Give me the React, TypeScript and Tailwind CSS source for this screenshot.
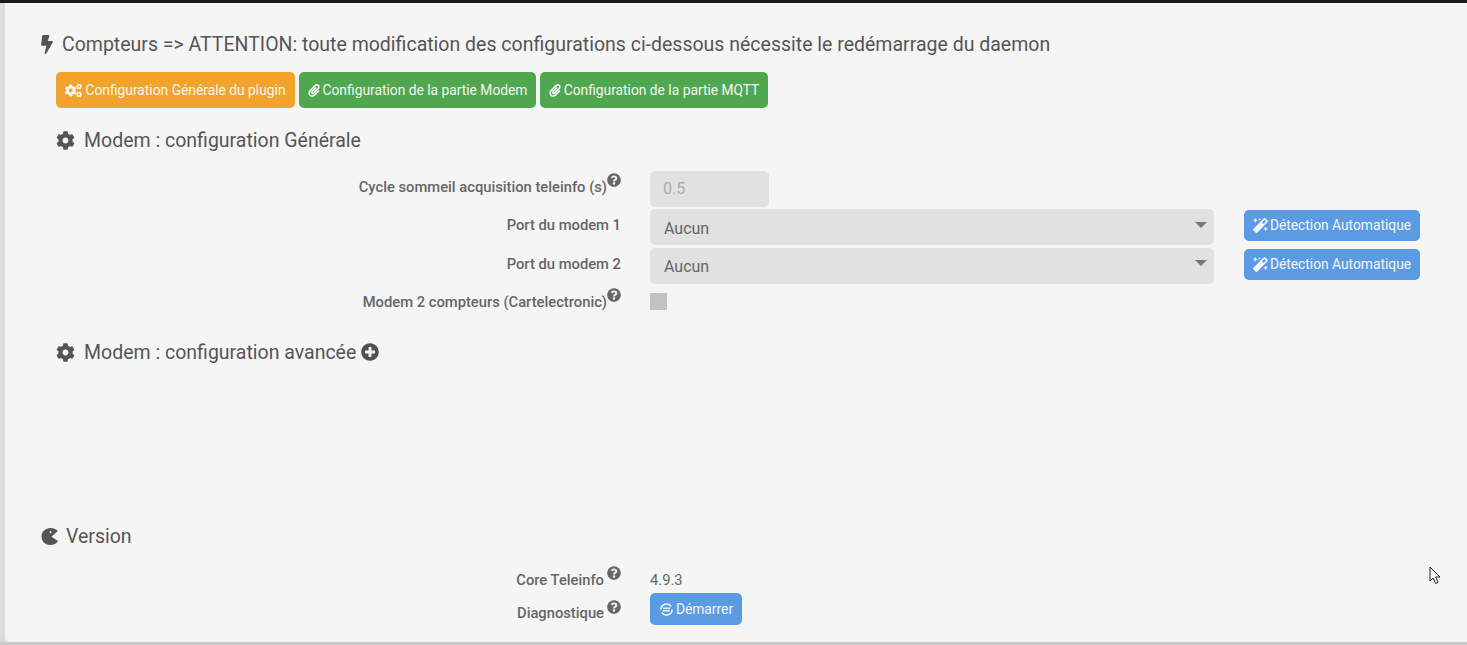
import type { ReactNode } from "react";
import { FaBolt, FaCog, FaCogs, FaMagic, FaPaperclip, FaPlusCircle, FaQuestionCircle } from "react-icons/fa";

const PacmanIcon = ({ className }: { className?: string }) => (
  <svg viewBox="0 0 18 18" className={className} fill="currentColor">
    <path d="M10 0.5C5 0.2 0.5 4 0.5 9s4 8.5 9 8.5c3.2 0 6-1.5 7.5-4L10.5 9.3 16.8 3.6C15.2 1.8 12.8 0.6 10 0.5z" />
    <circle cx="9.5" cy="4.8" r="1" fill="#f5f5f5" />
  </svg>
);

const SyncCircleIcon = ({ className }: { className?: string }) => (
  <svg viewBox="0 0 16 16" className={className} fill="none" stroke="currentColor">
    <path d="M2 8a6 6 0 0 1 11-3.2" strokeWidth="1.6" />
    <path d="M14 8a6 6 0 0 1-11 3.2" strokeWidth="1.6" />
    <path d="M4.4 6.6h7.6M11.6 9.4H4" strokeWidth="1.5" />
  </svg>
);

const Section = ({ icon, children, extra }: { icon: ReactNode; children: ReactNode; extra?: ReactNode }) => (
  <h3 className="flex h-[26px] items-center pl-[51px] text-[19.5px] text-[#555]">
    {icon}
    <span className="relative top-[1px]">{children}</span>
    {extra}
  </h3>
);

const Row = ({
  label,
  help,
  className,
  labelClass = "mt-[6px]",
  helpClass = "mt-[2px]",
  children,
}: {
  label: string;
  help?: boolean;
  className?: string;
  labelClass?: string;
  helpClass?: string;
  children: ReactNode;
}) => (
  <div className={`flex ${className ?? ""}`}>
    <div className="flex w-[616px] shrink-0 items-start justify-end text-[14.75px] font-medium text-[#666]">
      <span className={`leading-[20px] ${labelClass}`}>{label}</span>
      {help && <FaQuestionCircle className={`h-[14px] w-[14px] shrink-0 text-[#666] ${helpClass}`} />}
    </div>
    <div className="ml-[29px] flex items-start">{children}</div>
  </div>
);

const Select = ({ className, caretClass }: { className: string; caretClass: string }) => (
  <div className={`relative flex h-[36px] w-[564px] items-center rounded-[5px] bg-[#e0e1e0] pl-[14px] text-[16px] text-[#666] ${className}`}>
    Aucun
    <span className={`absolute right-[7px] h-0 w-0 border-x-[6px] border-t-[6px] border-x-transparent border-t-[#777] ${caretClass}`} />
  </div>
);

const DetectButton = () => (
  <button
    type="button"
    className="ml-[30px] mt-px flex h-[31px] w-[176px] items-center justify-center gap-[2px] rounded-[5px] bg-[#5b9be3] text-[13.8px] text-[#f5f5f5]"
  >
    <FaMagic className="h-[15px] w-[15px]" />
    Détection Automatique
  </button>
);

const App = () => {
  return (
    <div className="relative h-[645px] overflow-hidden bg-[#c9c9c9] font-['Roboto',sans-serif]">
      <div className="h-[3px] bg-[#1b1b1b]" />
      <div className="h-[639px] bg-[#dcdcdc] pl-[5px]">
        <main className="h-full rounded-bl-[5px] bg-[#f5f5f5] pt-[28px]">
          <h3 className="flex h-[26px] items-center pl-[36px] text-[19.5px] text-[#555]">
            <FaBolt className="mr-[9px] h-[19px] w-[12px]" />
            <span className="relative top-[1px]">
              Compteurs =&gt; ATTENTION: toute modification des configurations ci-dessous nécessite le redémarrage du daemon
            </span>
          </h3>

          <div className="mt-[15px] flex gap-[4px] pl-[51px] text-[13.8px] text-[#f5f5f5]">
            <button type="button" className="flex h-[36px] w-[239px] items-center justify-center gap-[3px] rounded-[5px] bg-[#f2a32b]">
              <FaCogs className="h-[15px] w-[17px]" />
              Configuration Générale du plugin
            </button>
            <button type="button" className="flex h-[36px] w-[237px] items-center justify-center gap-[3px] rounded-[5px] bg-[#4fa84f]">
              <FaPaperclip className="h-[13px] w-[12px]" />
              Configuration de la partie Modem
            </button>
            <button type="button" className="flex h-[36px] w-[228px] items-center justify-center gap-[3px] rounded-[5px] bg-[#4fa84f]">
              <FaPaperclip className="h-[13px] w-[12px]" />
              Configuration de la partie MQTT
            </button>
          </div>

          <div className="mt-[19px]">
            <Section icon={<FaCog className="mr-[9px] h-[19px] w-[19px]" />}>Modem : configuration Générale</Section>
          </div>

          <Row label="Cycle sommeil acquisition teleinfo (s)" help className="mt-[18px]">
            <div className="flex h-[36px] w-[119px] items-center rounded-[5px] bg-[#e0e1e0] pl-[13px] text-[16px] text-[#adadad]">0.5</div>
          </Row>
          <Row label="Port du modem 1" className="mt-[2px]">
            <Select className="pt-[3px]" caretClass="top-[13px]" />
            <DetectButton />
          </Row>
          <Row label="Port du modem 2" className="mt-[3px]">
            <Select className="pt-[1px]" caretClass="top-[12px]" />
            <DetectButton />
          </Row>
          <Row label="Modem 2 compteurs (Cartelectronic)" help labelClass="mt-[5px]" helpClass="mt-[1px]" className="mt-[3px]">
            <span className="mt-[6px] h-[17px] w-[17px] bg-[#c2c2c2]" />
          </Row>

          <div className="mt-[27px]">
            <Section
              icon={<FaCog className="mr-[9px] h-[19px] w-[19px]" />}
              extra={<FaPlusCircle className="ml-[5px] h-[18px] w-[18px] text-[#4d5156]" />}
            >
              Modem : configuration avancée
            </Section>
          </div>

          <h3 className="mt-[158px] flex h-[26px] items-center pl-[36px] text-[19.5px] text-[#555]">
            <PacmanIcon className="mr-[7px] h-[19px] w-[18px]" />
            <span className="relative top-[1px]">Version</span>
          </h3>

          <Row label="Core Teleinfo" help labelClass="mt-[7px]" helpClass="ml-[3px] mt-[3px]" className="mt-[14px]">
            <span className="mt-[7px] text-[14.75px] leading-[20px] text-[#666]">4.9.3</span>
          </Row>
          <Row label="Diagnostique" help labelClass="mt-[10px]" helpClass="ml-[3px] mt-[7px]" className="mt-[3px]">
            <button type="button" className="flex h-[32px] w-[92px] items-center justify-center gap-[2px] rounded-[5px] bg-[#5b9be3] text-[13.8px] text-[#f5f5f5]">
              <SyncCircleIcon className="h-[15px] w-[15px]" />
              Démarrer
            </button>
          </Row>
        </main>
      </div>

      {/* mouse pointer caught in the capture */}
      <svg viewBox="0 0 13 19" className="absolute left-[1429px] top-[566px] h-[19px] w-[13px]" fill="#f5f5f5" stroke="#222" strokeWidth="1">
        <path d="M1 1v14l3.2-3 2.3 5.6 2.6-1.2-2.4-5.4h4.3z" />
      </svg>
    </div>
  );
};

export default App;
